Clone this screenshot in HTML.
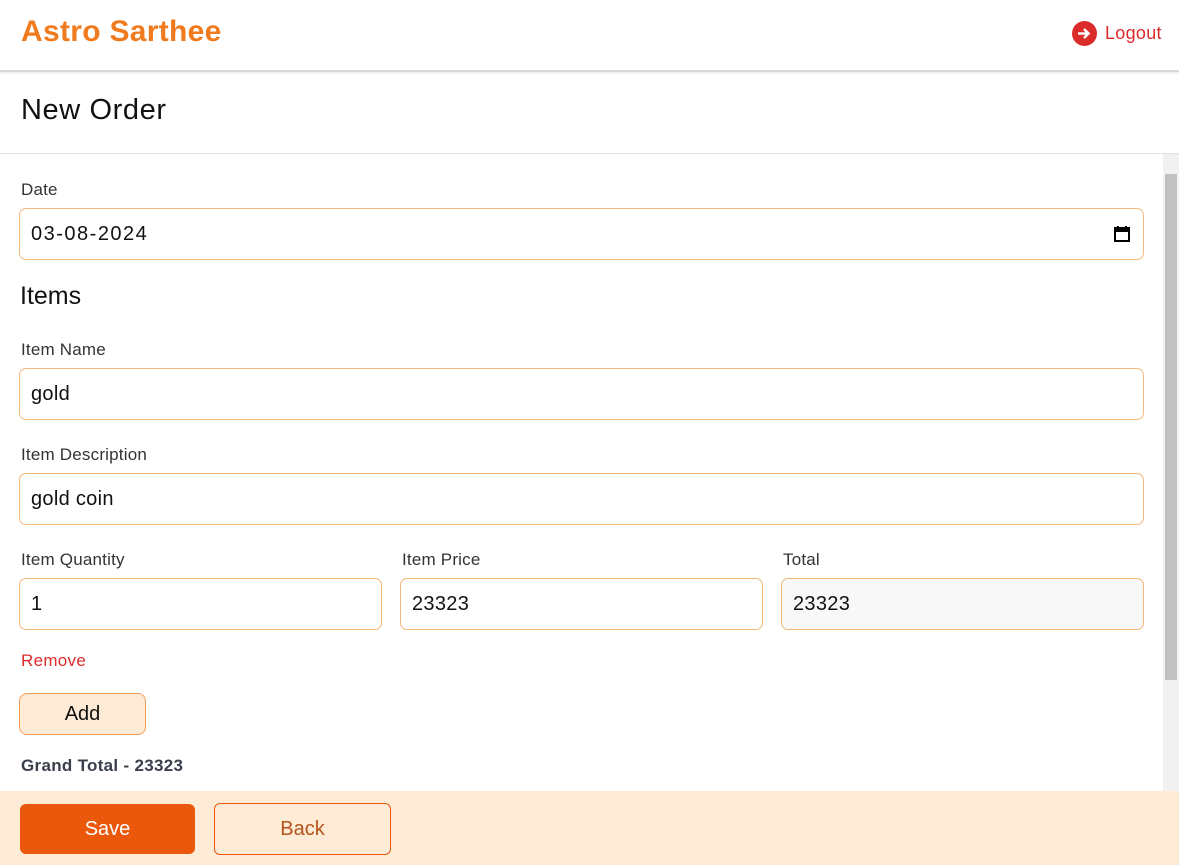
<!DOCTYPE html>
<html><head><style>
*{box-sizing:border-box;margin:0;padding:0}
body{width:1179px;height:865px;overflow:hidden;font-family:"Liberation Sans",sans-serif;background:#fff;position:relative;color:#111}
.hdr{position:absolute;left:0;top:0;width:1179px;height:72px;border-bottom:2px solid #d8d8d8;box-shadow:0 1px 2px rgba(0,0,0,.1)}
.logo{position:absolute;left:21px;top:15px;font-size:30px;font-weight:bold;color:#f07a1e;letter-spacing:0.3px}
.lo{position:absolute;left:1072px;top:21px;display:flex;align-items:center;color:#dc2b2b;font-size:18px;letter-spacing:0.3px}
.lo .c{width:25px;height:25px;border-radius:50%;background:#dc2b2b;margin-right:8px;position:relative}
h1{position:absolute;left:21px;top:94px;font-size:29px;font-weight:normal;letter-spacing:0.6px}
.sep{position:absolute;left:0;top:153px;width:1179px;border-top:1px solid #e5e5e5}
.sb{position:absolute;left:1163px;top:154px;width:16px;height:637px;background:#f1f1f1}
.sb div{position:absolute;left:2px;top:20px;width:12px;height:506px;background:#c1c1c1}
.lbl{position:absolute;font-size:17px;color:#333;letter-spacing:0.2px}
.in{position:absolute;height:52px;border:1px solid #f5b77a;border-radius:7px;font-size:20px;padding:0 11px;line-height:50px;letter-spacing:0.3px}
.foot{position:absolute;left:0;top:791px;width:1179px;height:74px;background:#fdebd5}
.btn{position:absolute;border-radius:6px;text-align:center;font-size:20px}
</style></head><body>
<div class="hdr"><div class="logo">Astro Sarthee</div>
<div class="lo"><div class="c"><svg width="25" height="25" viewBox="0 0 25 25"><path d="M6 12.5h10M12 8l4.5 4.5L12 17" stroke="#fff" stroke-width="2.5" fill="none"/></svg></div>Logout</div></div>
<h1>New Order</h1>
<div class="sep"></div>
<div class="sb"><div></div></div>
<div class="lbl" style="left:21px;top:180px">Date</div>
<div class="in" style="left:19px;top:208px;width:1125px;letter-spacing:1.5px">03-08-2024<svg style="position:absolute;right:12px;top:16px" width="18" height="18" viewBox="0 0 18 18"><rect x="2" y="3" width="14" height="13" fill="none" stroke="#000" stroke-width="2"/><rect x="2" y="3" width="14" height="4" fill="#000"/><path d="M5 1v3M13 1v3" stroke="#000" stroke-width="2"/></svg></div>
<div style="position:absolute;left:20px;top:282px;font-size:25px">Items</div>
<div class="lbl" style="left:21px;top:340px">Item Name</div>
<div class="in" style="left:19px;top:368px;width:1125px">gold</div>
<div class="lbl" style="left:21px;top:445px">Item Description</div>
<div class="in" style="left:19px;top:473px;width:1125px">gold coin</div>
<div class="lbl" style="left:21px;top:550px">Item Quantity</div>
<div class="lbl" style="left:402px;top:550px">Item Price</div>
<div class="lbl" style="left:783px;top:550px">Total</div>
<div class="in" style="left:19px;top:578px;width:363px">1</div>
<div class="in" style="left:400px;top:578px;width:363px">23323</div>
<div class="in" style="left:781px;top:578px;width:363px;background:#f8f8f8">23323</div>
<div style="position:absolute;left:21px;top:651px;font-size:17px;color:#dc2b2b;letter-spacing:0.3px">Remove</div>
<div class="btn" style="left:19px;top:693px;width:127px;height:42px;line-height:40px;border:1px solid #f5a05a;background:#fdebd5;border-radius:8px">Add</div>
<div style="position:absolute;left:21px;top:756px;font-size:17px;font-weight:bold;color:#3a3f4c;letter-spacing:0.3px">Grand Total - 23323</div>
<div class="foot"></div>
<div class="btn" style="left:20px;top:804px;width:175px;height:50px;line-height:50px;background:#ea580c;color:#fff">Save</div>
<div class="btn" style="left:214px;top:803px;width:177px;height:52px;line-height:50px;border:1px solid #ea580c;color:#b5541c">Back</div>
</body></html>
